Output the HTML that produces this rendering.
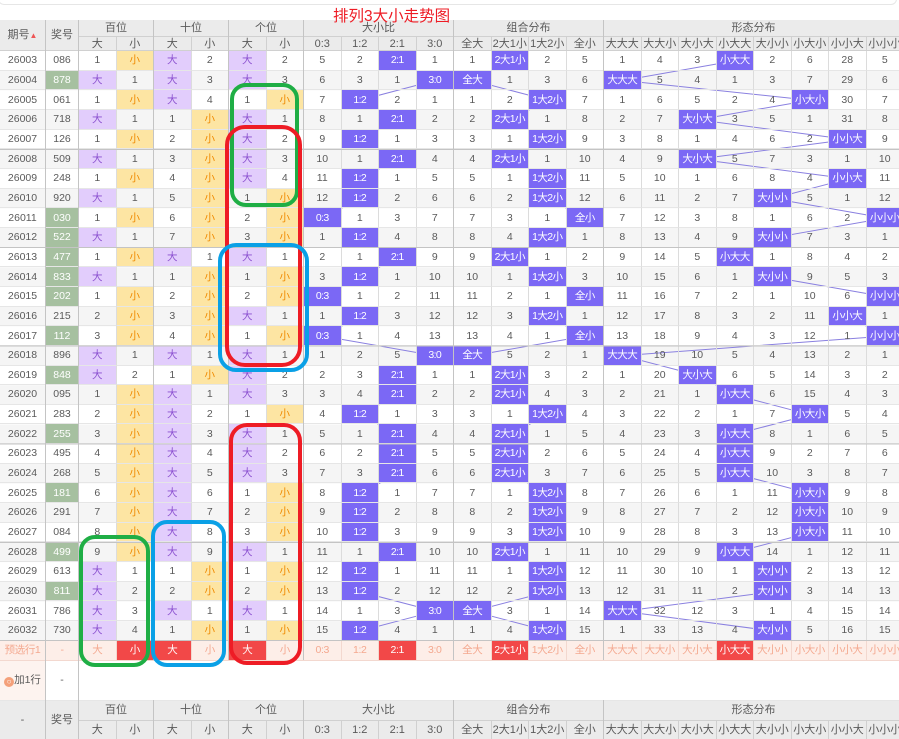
<!DOCTYPE html>
<html><head><meta charset="utf-8">
<style>
*{margin:0;padding:0;box-sizing:border-box}
body{width:899px;height:739px;overflow:hidden;background:#fff;font-family:"Liberation Sans","Noto Sans CJK SC",sans-serif;position:relative}
.topbox{position:absolute;left:-2px;top:-10px;width:899px;height:15px;border:1px solid #e6e6e6;border-radius:0 0 6px 6px}
.title{position:absolute;left:333px;top:4px;font-size:15.5px;color:#ee1c25;z-index:5;white-space:nowrap}
.wrap{position:absolute;left:0;top:20px;width:899px;height:719px;overflow:hidden;z-index:2}
table{border-collapse:separate;border-spacing:0;table-layout:fixed;width:904px}
td,th{font-size:10.5px;font-weight:normal;color:#5a5a5a;text-align:center;vertical-align:middle;border-right:1px solid #dcdcdc;border-bottom:1px solid #e6e6e6;padding:0;white-space:nowrap;overflow:hidden;line-height:12px}
thead th,tfoot th{background:#ebebeb;border-color:#d0d0d0;font-size:11px}
tr.h1 th{height:17px}
tr.h2 th{height:14px}
tbody tr{height:19.66px}
tbody td.b{background:#e2cdfc;color:#8a4fcf}
tbody td.s{background:#fde5a3;color:#f08a00}
tbody td.h{background:#7b68f5;color:#fff;letter-spacing:-0.6px;font-size:10.5px}
tbody td.g{background:#a6c0a0;color:#fff}
tr.pre td{height:20px;background:#fdeee8;color:#f4a88f;border-color:#f3d8cf;letter-spacing:-0.4px}
tr.pre td.r{background:#f24848;color:#fff}
tr.add td{height:40px;background:#fff}
tr.f1 th{height:20px}
tr.f2 th{height:19px}
.ov{position:absolute;left:0;top:0;pointer-events:none}
</style></head><body>
<div class="topbox"></div>
<div class="title">排列3大小走势图</div>
<svg class="ov" width="899" height="739" viewBox="0 0 899 739" style="z-index:1">
<g fill="#f5f5f5">
<rect x="0" y="70.66" width="899" height="19.66"/><rect x="0" y="109.98" width="899" height="19.66"/><rect x="0" y="149.3" width="899" height="19.66"/><rect x="0" y="188.62" width="899" height="19.66"/><rect x="0" y="227.94" width="899" height="19.66"/><rect x="0" y="267.26" width="899" height="19.66"/><rect x="0" y="306.58" width="899" height="19.66"/><rect x="0" y="345.9" width="899" height="19.66"/><rect x="0" y="385.22" width="899" height="19.66"/><rect x="0" y="424.54" width="899" height="19.66"/><rect x="0" y="463.86" width="899" height="19.66"/><rect x="0" y="503.18" width="899" height="19.66"/><rect x="0" y="542.5" width="899" height="19.66"/><rect x="0" y="581.82" width="899" height="19.66"/><rect x="0" y="621.14" width="899" height="19.66"/>
</g>
<g fill="none" stroke="#8a80e0" stroke-width="1">
<polyline points="398,60.8 435,80.5 360,100.2 398,119.8 360,139.5 398,159.1 360,178.8 360,198.5 323,218.1 360,237.8 398,257.4 360,277.1 323,296.8 360,316.4 323,336.1 435,355.7 398,375.4 398,395 360,414.7 398,434.4 398,454 398,473.7 360,493.4 360,513 360,532.7 398,552.3 360,572 360,591.7 435,611.3 360,631"/>
<polyline points="510,60.8 473,80.5 548,100.2 510,119.8 548,139.5 510,159.1 548,178.8 548,198.5 585,218.1 548,237.8 510,257.4 548,277.1 585,296.8 548,316.4 585,336.1 473,355.7 510,375.4 510,395 548,414.7 510,434.4 510,454 510,473.7 548,493.4 548,513 548,532.7 510,552.3 548,572 548,591.7 473,611.3 548,631"/>
<polyline points="735,60.8 623,80.5 810,100.2 698,119.8 848,139.5 698,159.1 848,178.8 773,198.5 885,218.1 773,237.8 735,257.4 773,277.1 885,296.8 848,316.4 885,336.1 623,355.7 698,375.4 735,395 810,414.7 735,434.4 735,454 735,473.7 810,493.4 810,513 810,532.7 735,552.3 773,572 773,591.7 623,611.3 773,631"/>
</g>
</svg>
<div class="wrap">
<table>
<colgroup><col style="width:46px"><col style="width:33px"><col span="22" style="width:37.5px"></colgroup>
<thead>
<tr class="h1"><th rowspan="2">期号<span style="color:#e55;font-size:8px">▲</span></th><th rowspan="2">奖号</th><th colspan="2">百位</th><th colspan="2">十位</th><th colspan="2">个位</th><th colspan="4">大小比</th><th colspan="4">组合分布</th><th colspan="8">形态分布</th></tr>
<tr class="h2"><th>大</th><th>小</th><th>大</th><th>小</th><th>大</th><th>小</th><th>0:3</th><th>1:2</th><th>2:1</th><th>3:0</th><th>全大</th><th>2大1小</th><th>1大2小</th><th>全小</th><th>大大大</th><th>大大小</th><th>大小大</th><th>小大大</th><th>大小小</th><th>小大小</th><th>小小大</th><th>小小小</th></tr>
</thead>
<tbody>
<tr><td>26003</td><td>086</td><td>1</td><td class=s>小</td><td class=b>大</td><td>2</td><td class=b>大</td><td>2</td><td>5</td><td>2</td><td class=h>2:1</td><td>1</td><td>1</td><td class=h>2大1小</td><td>2</td><td>5</td><td>1</td><td>4</td><td>3</td><td class=h>小大大</td><td>2</td><td>6</td><td>28</td><td>5</td></tr>
<tr><td>26004</td><td class=g>878</td><td class=b>大</td><td>1</td><td class=b>大</td><td>3</td><td class=b>大</td><td>3</td><td>6</td><td>3</td><td>1</td><td class=h>3:0</td><td class=h>全大</td><td>1</td><td>3</td><td>6</td><td class=h>大大大</td><td>5</td><td>4</td><td>1</td><td>3</td><td>7</td><td>29</td><td>6</td></tr>
<tr><td>26005</td><td>061</td><td>1</td><td class=s>小</td><td class=b>大</td><td>4</td><td>1</td><td class=s>小</td><td>7</td><td class=h>1:2</td><td>2</td><td>1</td><td>1</td><td>2</td><td class=h>1大2小</td><td>7</td><td>1</td><td>6</td><td>5</td><td>2</td><td>4</td><td class=h>小大小</td><td>30</td><td>7</td></tr>
<tr><td>26006</td><td>718</td><td class=b>大</td><td>1</td><td>1</td><td class=s>小</td><td class=b>大</td><td>1</td><td>8</td><td>1</td><td class=h>2:1</td><td>2</td><td>2</td><td class=h>2大1小</td><td>1</td><td>8</td><td>2</td><td>7</td><td class=h>大小大</td><td>3</td><td>5</td><td>1</td><td>31</td><td>8</td></tr>
<tr><td>26007</td><td>126</td><td>1</td><td class=s>小</td><td>2</td><td class=s>小</td><td class=b>大</td><td>2</td><td>9</td><td class=h>1:2</td><td>1</td><td>3</td><td>3</td><td>1</td><td class=h>1大2小</td><td>9</td><td>3</td><td>8</td><td>1</td><td>4</td><td>6</td><td>2</td><td class=h>小小大</td><td>9</td></tr>
<tr><td>26008</td><td>509</td><td class=b>大</td><td>1</td><td>3</td><td class=s>小</td><td class=b>大</td><td>3</td><td>10</td><td>1</td><td class=h>2:1</td><td>4</td><td>4</td><td class=h>2大1小</td><td>1</td><td>10</td><td>4</td><td>9</td><td class=h>大小大</td><td>5</td><td>7</td><td>3</td><td>1</td><td>10</td></tr>
<tr><td>26009</td><td>248</td><td>1</td><td class=s>小</td><td>4</td><td class=s>小</td><td class=b>大</td><td>4</td><td>11</td><td class=h>1:2</td><td>1</td><td>5</td><td>5</td><td>1</td><td class=h>1大2小</td><td>11</td><td>5</td><td>10</td><td>1</td><td>6</td><td>8</td><td>4</td><td class=h>小小大</td><td>11</td></tr>
<tr><td>26010</td><td>920</td><td class=b>大</td><td>1</td><td>5</td><td class=s>小</td><td>1</td><td class=s>小</td><td>12</td><td class=h>1:2</td><td>2</td><td>6</td><td>6</td><td>2</td><td class=h>1大2小</td><td>12</td><td>6</td><td>11</td><td>2</td><td>7</td><td class=h>大小小</td><td>5</td><td>1</td><td>12</td></tr>
<tr><td>26011</td><td class=g>030</td><td>1</td><td class=s>小</td><td>6</td><td class=s>小</td><td>2</td><td class=s>小</td><td class=h>0:3</td><td>1</td><td>3</td><td>7</td><td>7</td><td>3</td><td>1</td><td class=h>全小</td><td>7</td><td>12</td><td>3</td><td>8</td><td>1</td><td>6</td><td>2</td><td class=h>小小小</td></tr>
<tr><td>26012</td><td class=g>522</td><td class=b>大</td><td>1</td><td>7</td><td class=s>小</td><td>3</td><td class=s>小</td><td>1</td><td class=h>1:2</td><td>4</td><td>8</td><td>8</td><td>4</td><td class=h>1大2小</td><td>1</td><td>8</td><td>13</td><td>4</td><td>9</td><td class=h>大小小</td><td>7</td><td>3</td><td>1</td></tr>
<tr><td>26013</td><td class=g>477</td><td>1</td><td class=s>小</td><td class=b>大</td><td>1</td><td class=b>大</td><td>1</td><td>2</td><td>1</td><td class=h>2:1</td><td>9</td><td>9</td><td class=h>2大1小</td><td>1</td><td>2</td><td>9</td><td>14</td><td>5</td><td class=h>小大大</td><td>1</td><td>8</td><td>4</td><td>2</td></tr>
<tr><td>26014</td><td class=g>833</td><td class=b>大</td><td>1</td><td>1</td><td class=s>小</td><td>1</td><td class=s>小</td><td>3</td><td class=h>1:2</td><td>1</td><td>10</td><td>10</td><td>1</td><td class=h>1大2小</td><td>3</td><td>10</td><td>15</td><td>6</td><td>1</td><td class=h>大小小</td><td>9</td><td>5</td><td>3</td></tr>
<tr><td>26015</td><td class=g>202</td><td>1</td><td class=s>小</td><td>2</td><td class=s>小</td><td>2</td><td class=s>小</td><td class=h>0:3</td><td>1</td><td>2</td><td>11</td><td>11</td><td>2</td><td>1</td><td class=h>全小</td><td>11</td><td>16</td><td>7</td><td>2</td><td>1</td><td>10</td><td>6</td><td class=h>小小小</td></tr>
<tr><td>26016</td><td>215</td><td>2</td><td class=s>小</td><td>3</td><td class=s>小</td><td class=b>大</td><td>1</td><td>1</td><td class=h>1:2</td><td>3</td><td>12</td><td>12</td><td>3</td><td class=h>1大2小</td><td>1</td><td>12</td><td>17</td><td>8</td><td>3</td><td>2</td><td>11</td><td class=h>小小大</td><td>1</td></tr>
<tr><td>26017</td><td class=g>112</td><td>3</td><td class=s>小</td><td>4</td><td class=s>小</td><td>1</td><td class=s>小</td><td class=h>0:3</td><td>1</td><td>4</td><td>13</td><td>13</td><td>4</td><td>1</td><td class=h>全小</td><td>13</td><td>18</td><td>9</td><td>4</td><td>3</td><td>12</td><td>1</td><td class=h>小小小</td></tr>
<tr><td>26018</td><td>896</td><td class=b>大</td><td>1</td><td class=b>大</td><td>1</td><td class=b>大</td><td>1</td><td>1</td><td>2</td><td>5</td><td class=h>3:0</td><td class=h>全大</td><td>5</td><td>2</td><td>1</td><td class=h>大大大</td><td>19</td><td>10</td><td>5</td><td>4</td><td>13</td><td>2</td><td>1</td></tr>
<tr><td>26019</td><td class=g>848</td><td class=b>大</td><td>2</td><td>1</td><td class=s>小</td><td class=b>大</td><td>2</td><td>2</td><td>3</td><td class=h>2:1</td><td>1</td><td>1</td><td class=h>2大1小</td><td>3</td><td>2</td><td>1</td><td>20</td><td class=h>大小大</td><td>6</td><td>5</td><td>14</td><td>3</td><td>2</td></tr>
<tr><td>26020</td><td>095</td><td>1</td><td class=s>小</td><td class=b>大</td><td>1</td><td class=b>大</td><td>3</td><td>3</td><td>4</td><td class=h>2:1</td><td>2</td><td>2</td><td class=h>2大1小</td><td>4</td><td>3</td><td>2</td><td>21</td><td>1</td><td class=h>小大大</td><td>6</td><td>15</td><td>4</td><td>3</td></tr>
<tr><td>26021</td><td>283</td><td>2</td><td class=s>小</td><td class=b>大</td><td>2</td><td>1</td><td class=s>小</td><td>4</td><td class=h>1:2</td><td>1</td><td>3</td><td>3</td><td>1</td><td class=h>1大2小</td><td>4</td><td>3</td><td>22</td><td>2</td><td>1</td><td>7</td><td class=h>小大小</td><td>5</td><td>4</td></tr>
<tr><td>26022</td><td class=g>255</td><td>3</td><td class=s>小</td><td class=b>大</td><td>3</td><td class=b>大</td><td>1</td><td>5</td><td>1</td><td class=h>2:1</td><td>4</td><td>4</td><td class=h>2大1小</td><td>1</td><td>5</td><td>4</td><td>23</td><td>3</td><td class=h>小大大</td><td>8</td><td>1</td><td>6</td><td>5</td></tr>
<tr><td>26023</td><td>495</td><td>4</td><td class=s>小</td><td class=b>大</td><td>4</td><td class=b>大</td><td>2</td><td>6</td><td>2</td><td class=h>2:1</td><td>5</td><td>5</td><td class=h>2大1小</td><td>2</td><td>6</td><td>5</td><td>24</td><td>4</td><td class=h>小大大</td><td>9</td><td>2</td><td>7</td><td>6</td></tr>
<tr><td>26024</td><td>268</td><td>5</td><td class=s>小</td><td class=b>大</td><td>5</td><td class=b>大</td><td>3</td><td>7</td><td>3</td><td class=h>2:1</td><td>6</td><td>6</td><td class=h>2大1小</td><td>3</td><td>7</td><td>6</td><td>25</td><td>5</td><td class=h>小大大</td><td>10</td><td>3</td><td>8</td><td>7</td></tr>
<tr><td>26025</td><td class=g>181</td><td>6</td><td class=s>小</td><td class=b>大</td><td>6</td><td>1</td><td class=s>小</td><td>8</td><td class=h>1:2</td><td>1</td><td>7</td><td>7</td><td>1</td><td class=h>1大2小</td><td>8</td><td>7</td><td>26</td><td>6</td><td>1</td><td>11</td><td class=h>小大小</td><td>9</td><td>8</td></tr>
<tr><td>26026</td><td>291</td><td>7</td><td class=s>小</td><td class=b>大</td><td>7</td><td>2</td><td class=s>小</td><td>9</td><td class=h>1:2</td><td>2</td><td>8</td><td>8</td><td>2</td><td class=h>1大2小</td><td>9</td><td>8</td><td>27</td><td>7</td><td>2</td><td>12</td><td class=h>小大小</td><td>10</td><td>9</td></tr>
<tr><td>26027</td><td>084</td><td>8</td><td class=s>小</td><td class=b>大</td><td>8</td><td>3</td><td class=s>小</td><td>10</td><td class=h>1:2</td><td>3</td><td>9</td><td>9</td><td>3</td><td class=h>1大2小</td><td>10</td><td>9</td><td>28</td><td>8</td><td>3</td><td>13</td><td class=h>小大小</td><td>11</td><td>10</td></tr>
<tr><td>26028</td><td class=g>499</td><td>9</td><td class=s>小</td><td class=b>大</td><td>9</td><td class=b>大</td><td>1</td><td>11</td><td>1</td><td class=h>2:1</td><td>10</td><td>10</td><td class=h>2大1小</td><td>1</td><td>11</td><td>10</td><td>29</td><td>9</td><td class=h>小大大</td><td>14</td><td>1</td><td>12</td><td>11</td></tr>
<tr><td>26029</td><td>613</td><td class=b>大</td><td>1</td><td>1</td><td class=s>小</td><td>1</td><td class=s>小</td><td>12</td><td class=h>1:2</td><td>1</td><td>11</td><td>11</td><td>1</td><td class=h>1大2小</td><td>12</td><td>11</td><td>30</td><td>10</td><td>1</td><td class=h>大小小</td><td>2</td><td>13</td><td>12</td></tr>
<tr><td>26030</td><td class=g>811</td><td class=b>大</td><td>2</td><td>2</td><td class=s>小</td><td>2</td><td class=s>小</td><td>13</td><td class=h>1:2</td><td>2</td><td>12</td><td>12</td><td>2</td><td class=h>1大2小</td><td>13</td><td>12</td><td>31</td><td>11</td><td>2</td><td class=h>大小小</td><td>3</td><td>14</td><td>13</td></tr>
<tr><td>26031</td><td>786</td><td class=b>大</td><td>3</td><td class=b>大</td><td>1</td><td class=b>大</td><td>1</td><td>14</td><td>1</td><td>3</td><td class=h>3:0</td><td class=h>全大</td><td>3</td><td>1</td><td>14</td><td class=h>大大大</td><td>32</td><td>12</td><td>3</td><td>1</td><td>4</td><td>15</td><td>14</td></tr>
<tr><td>26032</td><td>730</td><td class=b>大</td><td>4</td><td>1</td><td class=s>小</td><td>1</td><td class=s>小</td><td>15</td><td class=h>1:2</td><td>4</td><td>1</td><td>1</td><td>4</td><td class=h>1大2小</td><td>15</td><td>1</td><td>33</td><td>13</td><td>4</td><td class=h>大小小</td><td>5</td><td>16</td><td>15</td></tr>
<tr class="pre"><td>预选行1</td><td>-</td><td>大</td><td class=r>小</td><td class=r>大</td><td>小</td><td class=r>大</td><td>小</td><td>0:3</td><td>1:2</td><td class=r>2:1</td><td>3:0</td><td>全大</td><td class=r>2大1小</td><td>1大2小</td><td>全小</td><td>大大大</td><td>大大小</td><td>大小大</td><td class=r>小大大</td><td>大小小</td><td>小大小</td><td>小小大</td><td>小小小</td></tr>
<tr class="add"><td style="background:#fdf3ef"><span style="display:inline-block;width:10px;height:10px;border-radius:5px;background:#f4a07a;color:#fff;font-size:8px;line-height:10px;vertical-align:-1px">○</span>加1行</td><td>-</td><td colspan="22" style="border-right:0"></td></tr>
</tbody>
<tfoot>
<tr class="f1"><th rowspan="2">-</th><th rowspan="2">奖号</th><th colspan="2">百位</th><th colspan="2">十位</th><th colspan="2">个位</th><th colspan="4">大小比</th><th colspan="4">组合分布</th><th colspan="8">形态分布</th></tr>
<tr class="f2"><th>大</th><th>小</th><th>大</th><th>小</th><th>大</th><th>小</th><th>0:3</th><th>1:2</th><th>2:1</th><th>3:0</th><th>全大</th><th>2大1小</th><th>1大2小</th><th>全小</th><th>大大大</th><th>大大小</th><th>大小大</th><th>小大大</th><th>大小小</th><th>小大小</th><th>小小大</th><th>小小小</th></tr>
</tfoot>
</table>
</div>
<svg class="ov" width="899" height="739" viewBox="0 0 899 739" style="z-index:3">
<g stroke="#c4c4c4" stroke-width="1">
<line x1="45.5" y1="20" x2="45.5" y2="739"/><line x1="78.5" y1="20" x2="78.5" y2="739"/><line x1="153.5" y1="20" x2="153.5" y2="660"/><line x1="228.5" y1="20" x2="228.5" y2="660"/><line x1="303.5" y1="20" x2="303.5" y2="660"/><line x1="453.5" y1="20" x2="453.5" y2="660"/><line x1="603.5" y1="20" x2="603.5" y2="660"/>
<line x1="153.5" y1="700" x2="153.5" y2="739"/><line x1="228.5" y1="700" x2="228.5" y2="739"/><line x1="303.5" y1="700" x2="303.5" y2="739"/><line x1="453.5" y1="700" x2="453.5" y2="739"/><line x1="603.5" y1="700" x2="603.5" y2="739"/>
<line x1="0" y1="149.5" x2="899" y2="149.5"/><line x1="0" y1="247.5" x2="899" y2="247.5"/><line x1="0" y1="346" x2="899" y2="346"/><line x1="0" y1="444" x2="899" y2="444"/><line x1="0" y1="542.5" x2="899" y2="542.5"/><line x1="0" y1="640.5" x2="899" y2="640.5"/>
</g>
<g fill="none" stroke-width="4">
<rect x="232" y="85" width="65" height="120" rx="14" stroke="#1fae45"/>
<rect x="227" y="127" width="73" height="238" rx="18" stroke="#ee1c25"/>
<rect x="220" y="245" width="87" height="125" rx="16" stroke="#0aa0e6"/>
<rect x="231" y="425" width="69" height="238" rx="16" stroke="#ee1c25"/>
<rect x="81" y="537" width="67" height="128" rx="14" stroke="#1fae45"/>
<rect x="153" y="522" width="71" height="143" rx="14" stroke="#0aa0e6"/>
</g>
</svg>
</body></html>
